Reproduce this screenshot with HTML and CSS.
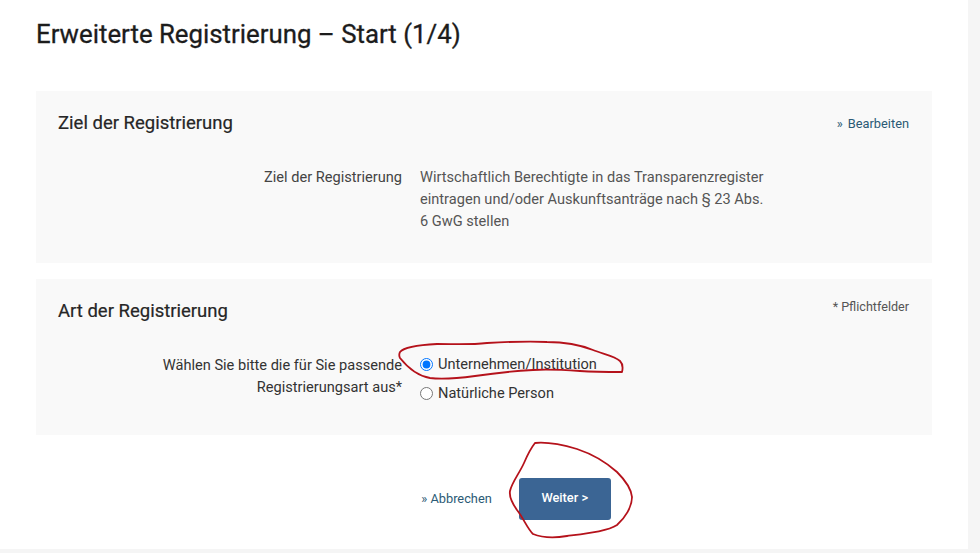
FILE: index.html
```html
<!DOCTYPE html>
<html lang="de">
<head>
    <meta charset="UTF-8">
    <meta name="viewport" content="width=device-width, initial-scale=1.0">
    <title>Erweiterte Registrierung</title>
    <link rel="stylesheet" href="styles.css">
</head>
<body>
    <div class="page">
        <h1>Erweiterte Registrierung – Start (1/4)</h1>

        <section class="panel panel-goal">
            <div class="panel-head">
                <h2>Ziel der Registrierung</h2>
                <a class="edit-link" href="#"><span class="arrows">»</span>Bearbeiten</a>
            </div>
            <div class="row">
                <div class="row-label">Ziel der Registrierung</div>
                <div class="row-value">Wirtschaftlich Berechtigte in das Transparenzregister eintragen und/oder Auskunftsanträge nach § 23 Abs. 6 GwG stellen</div>
            </div>
        </section>

        <section class="panel panel-type">
            <div class="panel-head">
                <h2>Art der Registrierung</h2>
                <span class="required-note">* Pflichtfelder</span>
            </div>
            <div class="row">
                <div class="row-label dark">Wählen Sie bitte die für Sie passende Registrierungsart aus*</div>
                <div class="options">
                    <label class="option"><input type="radio" name="art" checked>Unternehmen/Institution</label>
                    <label class="option"><input type="radio" name="art">Natürliche Person</label>
                </div>
            </div>
        </section>

        <div class="actions">
            <a class="cancel-link" href="#">» Abbrechen</a>
            <button class="btn" type="button">Weiter &gt;</button>
        </div>
    </div>

    <!-- red pen marks on top of the screenshot -->
    <svg class="marks" viewBox="0 0 980 553" aria-hidden="true">
        <path d="M400 352 C404 347 418 345 437 344 C455 344 470 345 487 343 C505 342 530 341 547 342 C560 342 578 344 593 350 C603 354 615 356 620 361 C623 364 623 368 622 372 C612 372 595 372 580 371 C565 370 550 369 533 370 C515 371 495 373 475 376 C460 378 445 380 430 378 C418 376 408 368 400 358 C399 356 399 354 400 352 Z"/>
        <path d="M535 443 C545 442 560 444 577 449 C592 454 607 463 617 472 C624 479 631 487 632 497 C632 507 625 518 617 525 C608 531 590 533 567 536 C555 538 543 538 533 534 C527 528 524 519 517 510 C512 503 509 497 510 491 C512 482 519 474 524 463 C527 456 531 448 535 443 Z"/>
    </svg>
</body>
</html>
```

FILE: styles.css
```css
html, body {
    margin: 0;
    padding: 0;
    height: 553px;
    overflow: hidden;
}

body {
    position: relative;
    background-color: #f5f5f5;
    font-family: Roboto, "Liberation Sans", sans-serif;
    font-size: 14.6px;
    line-height: 22px;
    color: #555;
}

.page {
    box-sizing: border-box;
    width: 968px;
    height: 549px;
    padding: 0 36px;
    background-color: #fff;
}

h1 {
    margin: 0;
    padding: 18px 0 41px;
    font-size: 25.8px;
    line-height: 32px;
    font-weight: 400;
    color: #1c1c1c;
    -webkit-text-stroke: 0.3px #1c1c1c;
}

h2 {
    margin: 0;
    font-size: 18.5px;
    line-height: 22px;
    font-weight: 400;
    color: #262626;
    -webkit-text-stroke: 0.2px #262626;
}

.panel {
    box-sizing: border-box;
    padding: 21px 23px 0 22px;
    background-color: #f9f9f9;
}

.panel-goal {
    height: 172px;
    margin-bottom: 16px;
}

.panel-type {
    height: 156px;
}

.panel-head {
    display: flex;
    justify-content: space-between;
    align-items: center;
    margin-bottom: 32px;
}

.panel-type .panel-head {
    align-items: flex-start;
    margin-bottom: 31px;
}

.edit-link,
.cancel-link {
    font-size: 12.8px;
    color: #2b5a75;
    text-decoration: none;
}

.edit-link {
    padding-top: 2px;
    line-height: 16px;
}

.arrows {
    margin-right: 5px;
}

.required-note {
    font-size: 12.6px;
    line-height: 14px;
    color: #555;
}

.row {
    display: flex;
    gap: 18px;
}

.row-label {
    box-sizing: border-box;
    width: 344px;
    flex: none;
    padding-left: 90px;
    text-align: right;
    color: #444;
}

.row-label.dark {
    padding-top: 1px;
    color: #333;
}

.row-value {
    width: 350px;
}

.options {
    display: flex;
    flex-direction: column;
    gap: 7px;
    color: #333;
}

.option {
    display: flex;
    align-items: center;
    height: 22px;
}

.option input {
    width: 13px;
    height: 13px;
    margin: 0 5px 0 0;
}

.actions {
    display: flex;
    justify-content: center;
    align-items: center;
    gap: 27px;
    padding-top: 43px;
    padding-left: 64px;
}

.btn {
    width: 92px;
    height: 42px;
    padding: 0 0 3px;
    border: none;
    border-radius: 3px;
    background-color: #3b6594;
    color: #fff;
    font-family: Roboto, "Liberation Sans", sans-serif;
    font-size: 12.8px;
    font-weight: 500;
}

.marks {
    position: absolute;
    top: 0;
    left: 0;
    width: 980px;
    height: 553px;
    pointer-events: none;
}

.marks path {
    fill: none;
    stroke: #b5121b;
    stroke-width: 1.8;
    stroke-linejoin: round;
}
```
